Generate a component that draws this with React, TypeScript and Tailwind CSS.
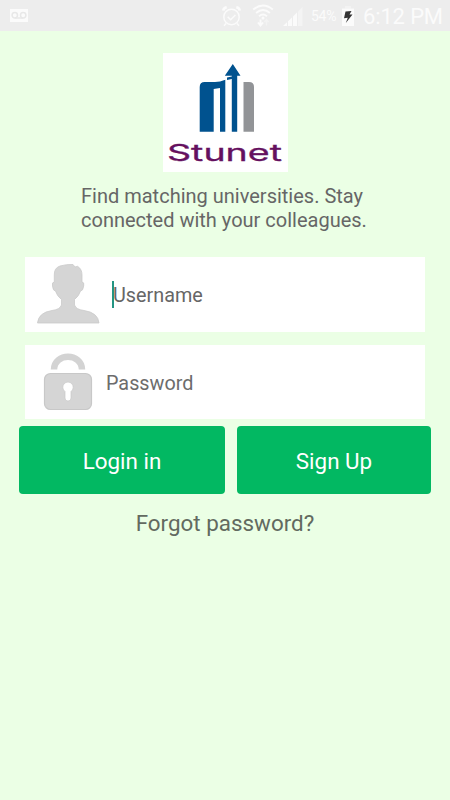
import React from "react";

function StatusBar() {
  return (
    <header className="flex h-[31px] shrink-0 items-center bg-[#ededed] text-[#fbfbfb]">
      <svg className="ml-[10px] h-[13px] w-[18px]" viewBox="0 0 18 13">
        <rect width="18" height="13" fill="#fbfbfb" />
        <g fill="none" stroke="#e8e8e8" strokeWidth="1.5">
          <circle cx="4.8" cy="6.3" r="2.7" />
          <circle cx="13.2" cy="6.3" r="2.7" />
          <path d="M4.8 9H13.2" />
        </g>
      </svg>
      <svg className="ml-[193px] h-[22px] w-[21px]" viewBox="0 0 21 22" fill="none" stroke="#fbfbfb" strokeWidth="1.5">
        <circle cx="10.5" cy="12" r="7.7" />
        <path d="M6.6 11.8l3 3 4.8-4.8M5 18.5l-2 2.3M16 18.5l2 2.3" />
        <path d="M2.3 5.6Q2.5 3 5.7 2.3M18.7 5.6Q18.5 3 15.3 2.3" strokeWidth="2.6" />
      </svg>
      <svg className="ml-[10px] h-[24px] w-[22px]" viewBox="0 0 22 24" fill="none" stroke="#fbfbfb" strokeWidth="1.9">
        <path d="M1.2 5.5Q11-2.5 20.8 5.5M4.1 9Q11 3 17.9 9M7 12.2Q11 9 15 12.2" />
        <circle cx="11" cy="14" r="1.5" fill="#fbfbfb" stroke="none" />
        <path d="M8.5 15.5V21M6 18.5L8.5 21.5L11 18.5" />
        <path d="M14.5 21.5V16.5M12.5 18L14.5 15.5L16.5 18" stroke="#f3f3f3" strokeWidth="1.4" />
      </svg>
      <svg className="ml-[9px] h-[20px] w-[20px]" viewBox="0 0 20 20" fill="#fbfbfb">
        <path d="M0 20L4 16.2V20ZM5 20V15.2L9 11.4V20ZM10 20V10.4L14 6.6V20Z" />
        <path d="M15 20V5.6L19.5 1V20Z" fill="#f4f4f4" />
      </svg>
      <span className="ml-[8px] mt-[2px] w-[27px] whitespace-nowrap text-[14px] tracking-[-0.3px]">54%</span>
      <svg className="ml-[4px] h-[20px] w-[12px]" viewBox="0 0 12 20">
        <path d="M3 0H9V2.6H3Z" fill="#f3f3f3" />
        <path d="M0 2.6H12V20H0Z" fill="#fbfbfb" />
        <path d="M3.5 5.5L9.5 5L7.5 8.6L10.5 8.5L3.8 17L5.8 11.8L2 12.2Z" fill="#333" />
      </svg>
      <span className="ml-[9px] mt-[2px] whitespace-nowrap text-[22px] leading-[31px] tracking-[-0.15px]">6:12 PM</span>
    </header>
  );
}

function Logo() {
  return (
    <svg className="mt-[22px] h-[119px] w-[125px] bg-white" viewBox="0 0 125 119">
      <path d="M36.7 78.7V34Q36.7 29 41.7 29H52Q57 29 62.3 26.8V78.7H57V35L50.7 36V78.7Z" fill="#00528f" />
      <path d="M68.8 78.7V26L64 27V24.5L68.8 23.5V22.7H61.8L69.8 11L77.5 22.7H74.2V78.7Z" fill="#00528f" />
      <path d="M80.5 29H86Q91 29 91 34V78.7H80.5Z" fill="#929497" />
      <text x="4" y="108" textLength="115" lengthAdjust="spacingAndGlyphs" fill="#65105f" stroke="#65105f" strokeWidth=".3" className="font-[Inter,sans-serif] text-[23.5px] font-normal">Stunet</text>
    </svg>
  );
}

function PersonIcon() {
  return (
    <svg className="-mt-px h-[62px] w-[64px]" viewBox="0 0 64 62">
      <path d="M18.3 12Q18 5 24 3Q31 1 37 1.5L39 4L41.500 3.300Q46 6 46 12V19Q48.500 19 47.700 23Q47 28 44.500 28Q43 33 38.500 36.500V42Q40 46.500 48 47.500Q62 49.500 63 60H1.500Q2.500 49.500 16 47.500Q24 46.500 25.500 42V36.500Q21 33 19.500 28Q17 28 16.500 23Q15.700 19 18.300 19Z" fill="#d5d5d5" stroke="#cacaca" strokeWidth=".8" />
    </svg>
  );
}

function LockIcon() {
  return (
    <svg className="h-[60px] w-[50px]" viewBox="0 0 50 60">
      <path d="M11 17.5C11.5 .5 38.500 .5 39 17.5" fill="none" stroke="#d3d3d3" strokeWidth="6.5" />
      <rect x="1.500" y="21.500" width="47" height="36" rx="6" fill="#d5d5d5" stroke="#c8c8c8" strokeWidth="1.2" />
      <path d="M22 39.500A5.200 5.200 0 1 1 28 39.500V46Q28 49 25 49T22 46Z" fill="white" stroke="#c8c8c8" strokeWidth=".7" />
    </svg>
  );
}

export default function App() {
  return (
    <main className="flex h-[800px] w-[450px] flex-col overflow-hidden bg-[#ebffe5] font-[Roboto,sans-serif]">
      <StatusBar />
      <div className="flex flex-col items-center">
        <Logo />
        <p className="mt-[12px] w-[288px] whitespace-nowrap text-[20px] leading-[24px] text-[#666]">
          Find matching universities. Stay<br />connected with your colleagues.
        </p>
        <div className="mt-[25px] flex h-[75px] w-[400px] items-center bg-white pl-[11px]">
          <PersonIcon />
          <div className="ml-[12px] h-[27px] w-[2px] bg-[#249583]" />
          <span className="-ml-px mt-[3px] text-[19.8px] text-[#666]">Username</span>
        </div>
        <div className="mt-[13px] flex h-[74px] w-[400px] items-center bg-white pl-[18px]">
          <LockIcon />
          <span className="ml-[13px] mt-[4px] text-[19.8px] text-[#6c6c6c]">Password</span>
        </div>
        <div className="mt-[7px] flex h-[68px] w-[412px] gap-[12px] text-[22.4px] text-white">
          <button className="w-[206px] rounded-[4px] bg-[#02b862] pt-[4px]">Login in</button>
          <button className="w-[194px] rounded-[4px] bg-[#02b862] pt-[4px]">Sign Up</button>
        </div>
        <a className="mt-[13px] text-[22.4px] leading-[33px] text-[#626a60]">Forgot password?</a>
      </div>
    </main>
  );
}
